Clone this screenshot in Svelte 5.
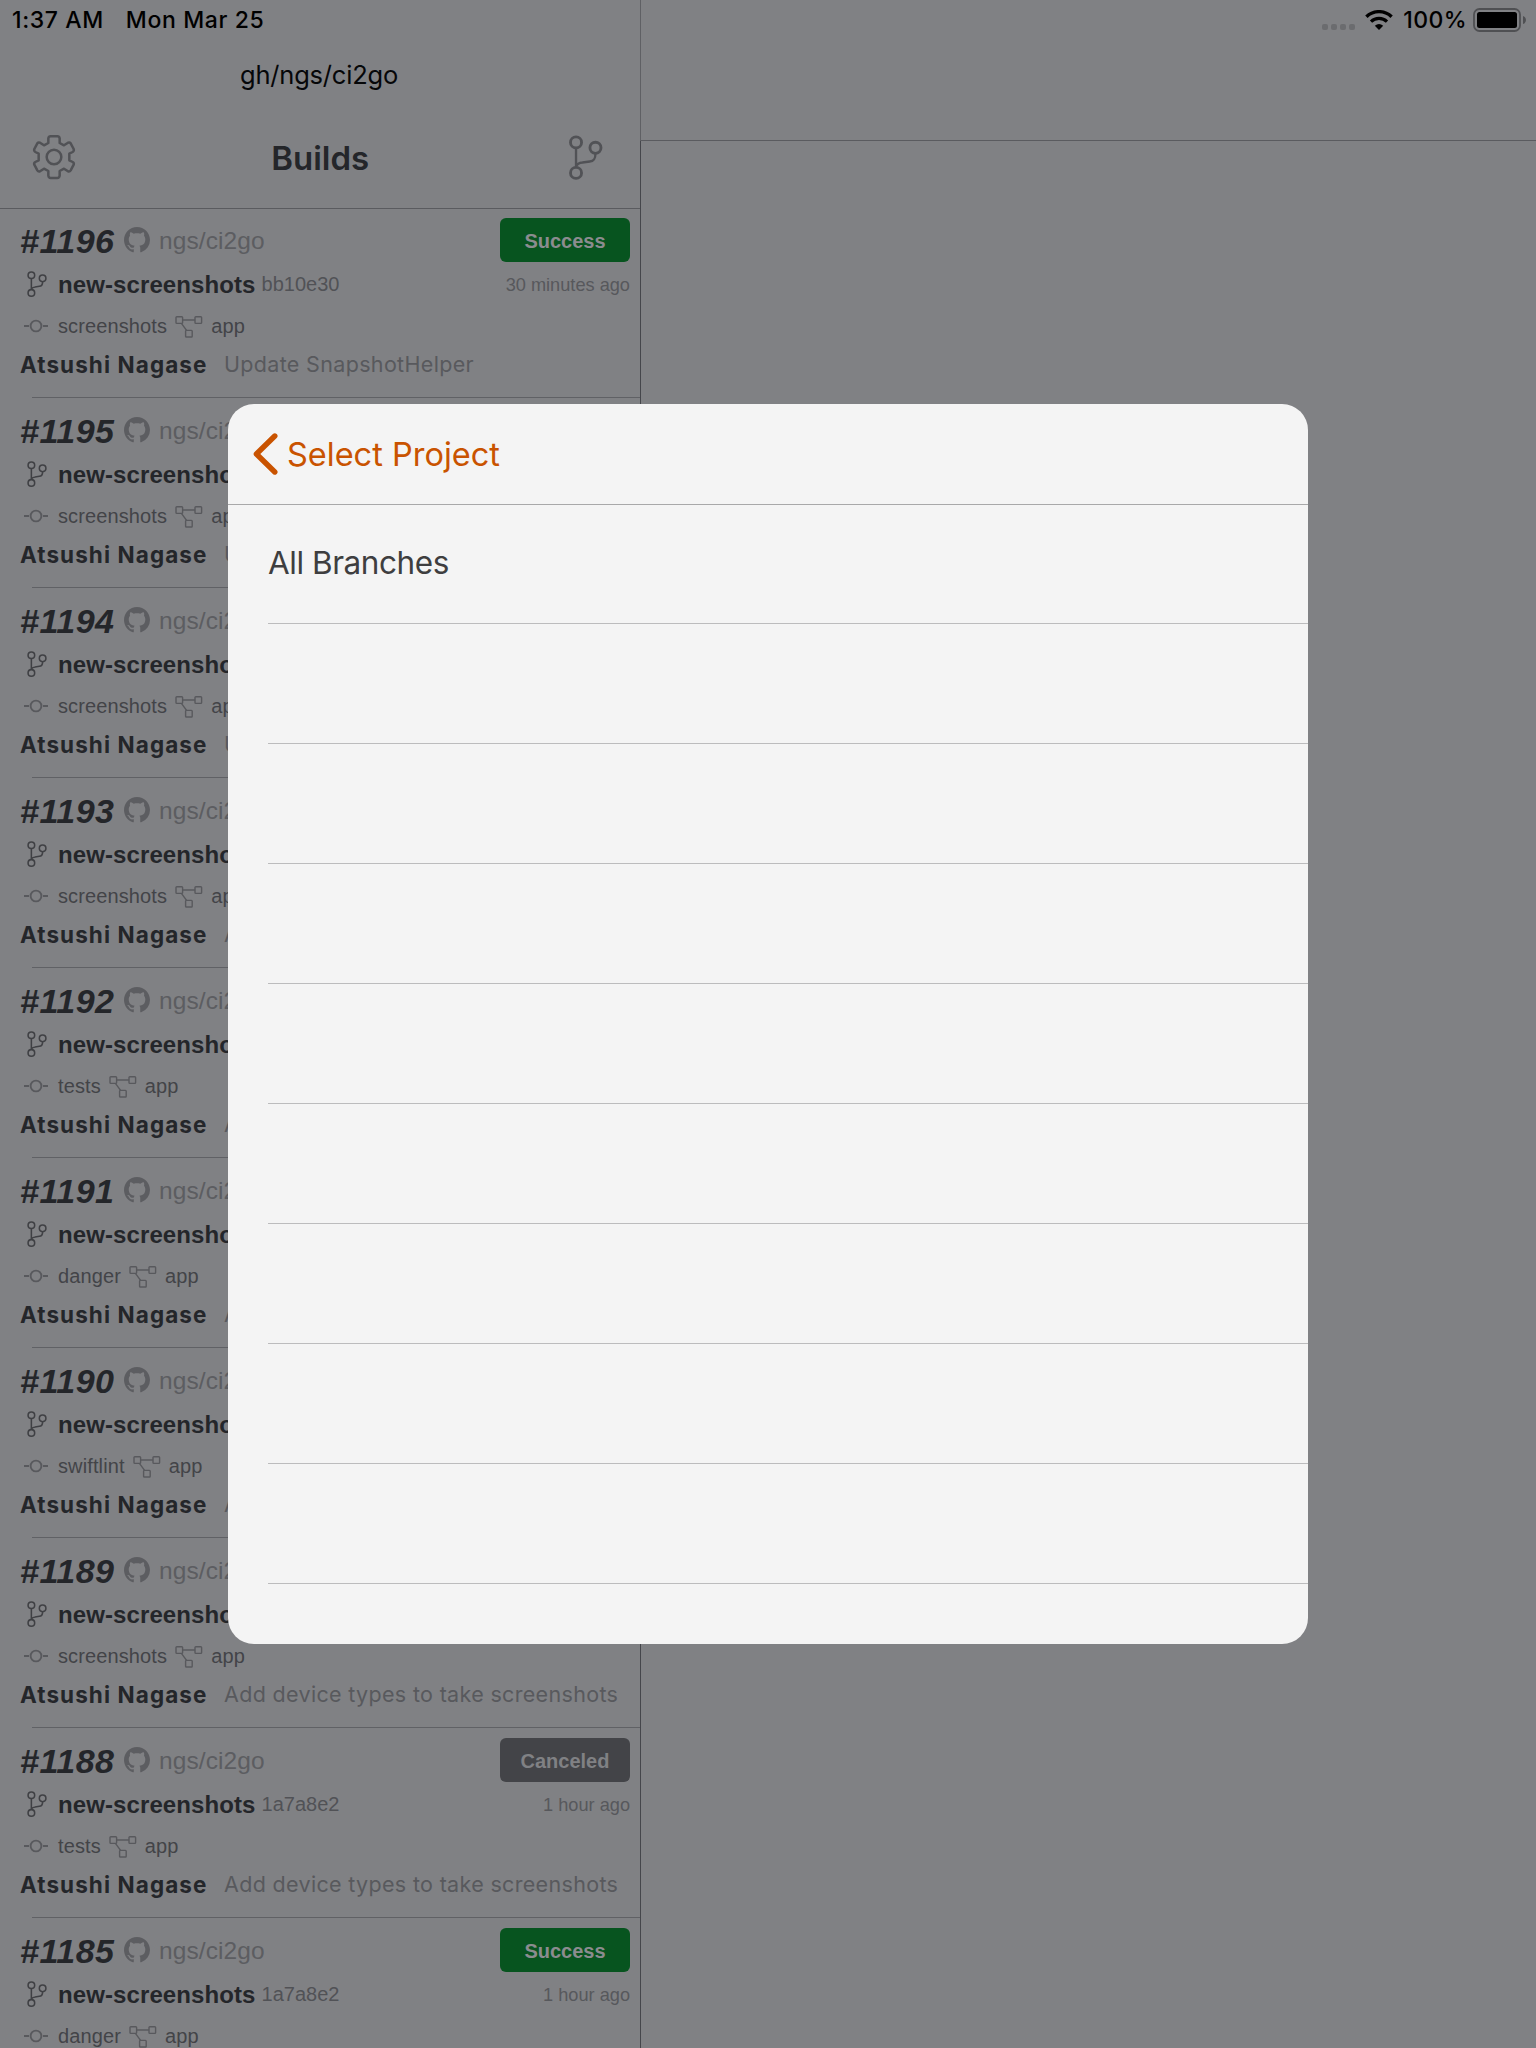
<script>
  const update = 'Update SnapshotHelper';
  const add = 'Add device types to take screenshots';
  const builds = [
    { num: 1196, sha: 'bb10e30', status: 'Success', time: '30 minutes ago', job: 'screenshots', msg: update },
    { num: 1195, sha: 'bb10e30', status: 'Success', time: '30 minutes ago', job: 'screenshots', msg: update },
    { num: 1194, sha: 'bb10e30', status: 'Success', time: '30 minutes ago', job: 'screenshots', msg: update },
    { num: 1193, sha: '1a7a8e2', status: 'Success', time: '1 hour ago', job: 'screenshots', msg: add },
    { num: 1192, sha: '1a7a8e2', status: 'Success', time: '1 hour ago', job: 'tests', msg: add },
    { num: 1191, sha: '1a7a8e2', status: 'Success', time: '1 hour ago', job: 'danger', msg: add },
    { num: 1190, sha: '1a7a8e2', status: 'Success', time: '1 hour ago', job: 'swiftlint', msg: add },
    { num: 1189, sha: '1a7a8e2', status: 'Success', time: '1 hour ago', job: 'screenshots', msg: add },
    { num: 1188, sha: '1a7a8e2', status: 'Canceled', time: '1 hour ago', job: 'tests', msg: add },
    { num: 1185, sha: '1a7a8e2', status: 'Success', time: '1 hour ago', job: 'danger', msg: '' }
  ];
  const branches = ['All Branches', '', '', '', '', '', '', '', '', ''];
</script>

<div class="screen">
  <aside class="sidebar">
    <header class="top">
      <div class="status">
        <span class="clock">1:37 AM</span>
        <span class="date">Mon Mar 25</span>
      </div>
      <div class="prompt">gh/ngs/ci2go</div>
      <div class="nav">
        <svg class="gear" viewBox="96 402 132 138" fill="none" stroke="currentColor" stroke-width="7.5" stroke-linejoin="round">
          <path d="M145 415Q146 409 152 409H172Q178 409 179 415V429L192 436L204 428Q209 426 212 430L221 447Q223 453 218 456L208 461V481L218 486Q223 489 221 494L212 511Q209 516 204 514L192 506L179 513V527Q178 534 172 534H152Q146 534 145 527V513L132 506L120 514Q115 516 112 511L103 494Q101 489 106 486L116 481V461L106 456Q101 453 103 447L112 430Q115 426 120 428L132 436L145 429Z" />
          <circle cx="162" cy="471" r="22" />
        </svg>
        <h1>Builds</h1>
        <svg class="branch-btn" viewBox="0 0 100 134" fill="none" stroke="currentColor" stroke-width="8.5">
          <circle cx="21" cy="22" r="16.5" /><circle cx="79" cy="38" r="16.5" /><circle cx="21" cy="113" r="16.5" />
          <path stroke-width="7" d="M21 39V96M79 55C79 72 74 78 62 79L40 82C30 83 24 86 21 94" />
        </svg>
      </div>
    </header>
    <ul class="builds">
      {#each builds as b}
        <li class="build">
          <div class="line head">
            <span class="num">#{b.num}</span>
            <svg class="gh" viewBox="0 0 16 16" fill="currentColor"><path d="M8 0C3.58 0 0 3.58 0 8c0 3.54 2.29 6.53 5.47 7.59.4.07.55-.17.55-.38 0-.19-.01-.82-.01-1.49-2.01.37-2.53-.49-2.69-.94-.09-.23-.48-.94-.82-1.13-.28-.15-.68-.52-.01-.53.63-.01 1.08.58 1.23.82.72 1.21 1.87.87 2.33.66.07-.52.28-.87.51-1.07-1.78-.2-3.64-.89-3.64-3.95 0-.87.31-1.59.82-2.15-.08-.2-.36-1.02.08-2.12 0 0 .67-.21 2.2.82.64-.18 1.32-.27 2-.27s1.36.09 2 .27c1.53-1.04 2.2-.82 2.2-.82.44 1.1.16 1.92.08 2.12.51.56.82 1.27.82 2.15 0 3.07-1.87 3.75-3.65 3.95.29.25.54.73.54 1.48 0 1.07-.01 1.93-.01 2.2 0 .21.15.46.55.38A8.01 8.01 0 0 0 16 8c0-4.42-3.58-8-8-8z" /></svg>
            <span class="repo">ngs/ci2go</span>
            <span class="badge" class:canceled={b.status === 'Canceled'}>{b.status}</span>
          </div>
          <div class="line ref">
            <svg class="branch" viewBox="0 0 100 134" fill="none" stroke="currentColor" stroke-width="8">
              <circle cx="21" cy="22" r="17" /><circle cx="79" cy="38" r="17" /><circle cx="21" cy="113" r="17" />
              <path d="M21 39V96M79 55C79 72 74 78 62 79L40 82C30 83 24 86 21 94" />
            </svg>
            <b class="name">new-screenshots</b>
            <span class="sha">{b.sha}</span>
            <span class="time">{b.time}</span>
          </div>
          <div class="line job">
            <svg class="commit" viewBox="0 0 24 14" fill="none" stroke="currentColor" stroke-width="1.9">
              <circle cx="12" cy="7" r="5.4" /><path d="M0 7H5M19 7H24" />
            </svg>
            <span>{b.job}</span>
            <svg class="flow" viewBox="0 0 28 22" fill="none" stroke="currentColor" stroke-width="1.4">
              <rect x="1" y=".8" width="6.6" height="6.6" rx=".8" /><rect x="20" y=".8" width="6.6" height="6.6" rx=".8" /><rect x="10.6" y="14.4" width="6.6" height="6.6" rx=".8" />
              <path d="M7.6 4H20M6.4 7.4L11.6 14.4" />
            </svg>
            <span>app</span>
          </div>
          {#if b.msg}
            <div class="line commit-line">
              <b class="author">Atsushi Nagase</b>
              <span class="msg">{b.msg}</span>
            </div>
          {/if}
        </li>
      {/each}
    </ul>
  </aside>

  <main class="detail">
    <div class="detail-nav">
      <div class="indicators">
        <span class="dots"><i></i><i></i><i></i><i></i></span>
        <svg class="wifi" viewBox="0 0 28 20">
          <path d="M1.4 6.8A18 18 0 0 1 26.6 6.8" fill="none" stroke="#000" stroke-width="3.4" />
          <path d="M6 11.6A11.5 11.5 0 0 1 22 11.6" fill="none" stroke="#000" stroke-width="3.2" />
          <path d="M14 20L9.8 15.8Q14 12.4 18.2 15.8Z" />
        </svg>
        <span class="pct">100%</span>
        <svg class="battery" viewBox="0 0 53 24">
          <rect x="1" y="1" width="46" height="22" rx="5.5" fill="none" stroke="#4f5053" stroke-width="1.8" />
          <rect x="4" y="4" width="40" height="16" rx="2.5" />
          <path d="M50 8Q53 9 53 12T50 16Z" fill="#4f5053" />
        </svg>
      </div>
    </div>
    <div class="detail-body"></div>
  </main>

  <section class="modal">
    <header class="modal-nav">
      <svg class="back" viewBox="0 0 25 42" fill="none" stroke="currentColor" stroke-width="5.4" stroke-linecap="round" stroke-linejoin="round"><path d="M21.8 3L3.4 21L21.8 39" /></svg>
      <span>Select Project</span>
    </header>
    <ul class="branches">
      {#each branches as name}
        <li>{name}</li>
      {/each}
    </ul>
  </section>
</div>

<style>
  :global(body) { margin: 0; overflow: hidden; }
  .screen {
    position: relative;
    display: grid;
    grid-template-columns: 640px 1fr;
    width: 1536px;
    height: 2048px;
    overflow: hidden;
    background: #808184;
    color: #24262a;
    font-family: "Liberation Sans", Arial, sans-serif;
  }
  ul { list-style: none; margin: 0; padding: 0; }
  svg { display: block; flex: none; }
  span, b { white-space: nowrap; }

  .sidebar { height: 2048px; overflow: hidden; }
  .top {
    box-sizing: border-box;
    height: 209px;
    border-bottom: 1px solid #5a5b5f;
    font-family: Inter, sans-serif;
  }
  .status {
    display: flex;
    gap: 22px;
    height: 40px;
    padding-left: 12px;
    font-size: 23px;
    font-weight: 500;
    line-height: 40px;
    letter-spacing: 0.62px;
    color: #000;
  }
  .prompt {
    height: 68px;
    padding-right: 2px;
    line-height: 69px;
    text-align: center;
    font-size: 25.5px;
    letter-spacing: -0.2px;
    color: #060709;
  }
  .nav {
    display: flex;
    align-items: center;
    justify-content: space-between;
    height: 98px;
    padding: 0 37px 0 32px;
    color: #515256;
  }
  .gear { width: 44px; height: 46px; }
  .branch-btn { width: 33.5px; height: 45px; }
  h1 {
    margin: 1px 5px 0 0;
    font-size: 33px;
    font-weight: 600;
    line-height: 40px;
    color: #24262a;
  }

  .builds { margin-top: -1px; }
  .build {
    box-sizing: border-box;
    height: 190px;
    padding: 10px 10px 0 20px;
    background: linear-gradient(#606165, #606165) 32px 100% / 100% 1px no-repeat;
  }
  .line { display: flex; align-items: center; }
  .head { height: 44px; }
  .num { width: 104px; font-size: 34px; line-height: 40px; font-weight: 700; font-style: italic; letter-spacing: 0.5px; padding-top: 2px; }
  .gh { width: 26px; height: 26px; margin-right: 9px; color: #5c5d61; }
  .repo { padding-top: 2px; font-size: 24.5px; letter-spacing: 0.1px; color: #5c5d61; }
  .badge {
    width: 130px;
    height: 44px;
    margin-left: auto;
    border-radius: 6px;
    background: #07541f;
    color: #8b8c8f;
    font-size: 20px;
    font-weight: 700;
    line-height: 46px;
    text-align: center;
  }
  .badge.canceled { background: #434448; color: #808184; }
  .ref { height: 44px; }
  .branch { width: 20px; height: 26px; margin: 0 11px 0 7px; color: #3f4044; }
  .name { padding-top: 2px; font-size: 24px; letter-spacing: 0.1px; }
  .sha { margin-left: 6px; padding-top: 1px; font-size: 20px; color: #515256; }
  .time { margin-left: auto; padding-top: 2px; font-size: 18.2px; color: #57585c; }
  .job { height: 40px; font-size: 20px; letter-spacing: 0.12px; color: #434448; }
  .commit { width: 24px; height: 14px; margin: 0 10px 0 4px; color: #58595d; }
  .flow { width: 28px; height: 22px; margin: 2px 8px 0 8px; color: #58595d; }
  .commit-line { height: 37px; font-family: Inter, sans-serif; }
  .author { flex: none; width: 204px; font-size: 22.5px; font-weight: 700; letter-spacing: 1.08px; }
  .msg { padding-bottom: 2px; font-size: 21.5px; letter-spacing: 0.33px; color: #58595d; }

  .detail { display: flex; flex-direction: column; height: 2048px; }
  .detail-nav { height: 140px; border-left: 1px solid #5f6064; border-bottom: 1px solid #5a5b5f; }
  .detail-body { flex: 1; border-left: 1px solid #45464b; }
  .indicators {
    display: flex;
    align-items: center;
    justify-content: flex-end;
    height: 40px;
    padding-right: 10px;
    color: #000;
    font-family: Inter, sans-serif;
  }
  .dots { display: flex; gap: 3px; margin: 14px 10px 0 0; }
  .dots i { width: 6px; height: 6px; border-radius: 2px; background: #6b6c6f; }
  .wifi { width: 28px; height: 20px; }
  .pct { margin: 0 6px 0 10px; font-size: 23px; font-weight: 500; line-height: 40px; letter-spacing: 0.4px; }
  .battery { width: 53px; height: 24px; }

  .modal {
    position: absolute;
    left: 228px;
    top: 404px;
    width: 1080px;
    height: 1240px;
    overflow: hidden;
    border-radius: 26px;
    background: #f4f4f4;
    font-family: Inter, sans-serif;
  }
  .modal-nav {
    display: flex;
    align-items: center;
    height: 100px;
    padding-left: 25px;
    border-bottom: 1px solid #a8a8a9;
    color: #c95300;
    font-size: 32.5px;
  }
  .back { width: 25px; height: 42px; margin-right: 9px; }
  .branches { margin-left: 40px; }
  .branches li {
    box-sizing: border-box;
    height: 120px;
    border-bottom: 1px solid #bcbcbd;
    font-size: 31.5px;
    line-height: 116px;
    letter-spacing: -0.45px;
    color: #3e3e3f;
  }
  .branches li:first-child { height: 119px; }
</style>
